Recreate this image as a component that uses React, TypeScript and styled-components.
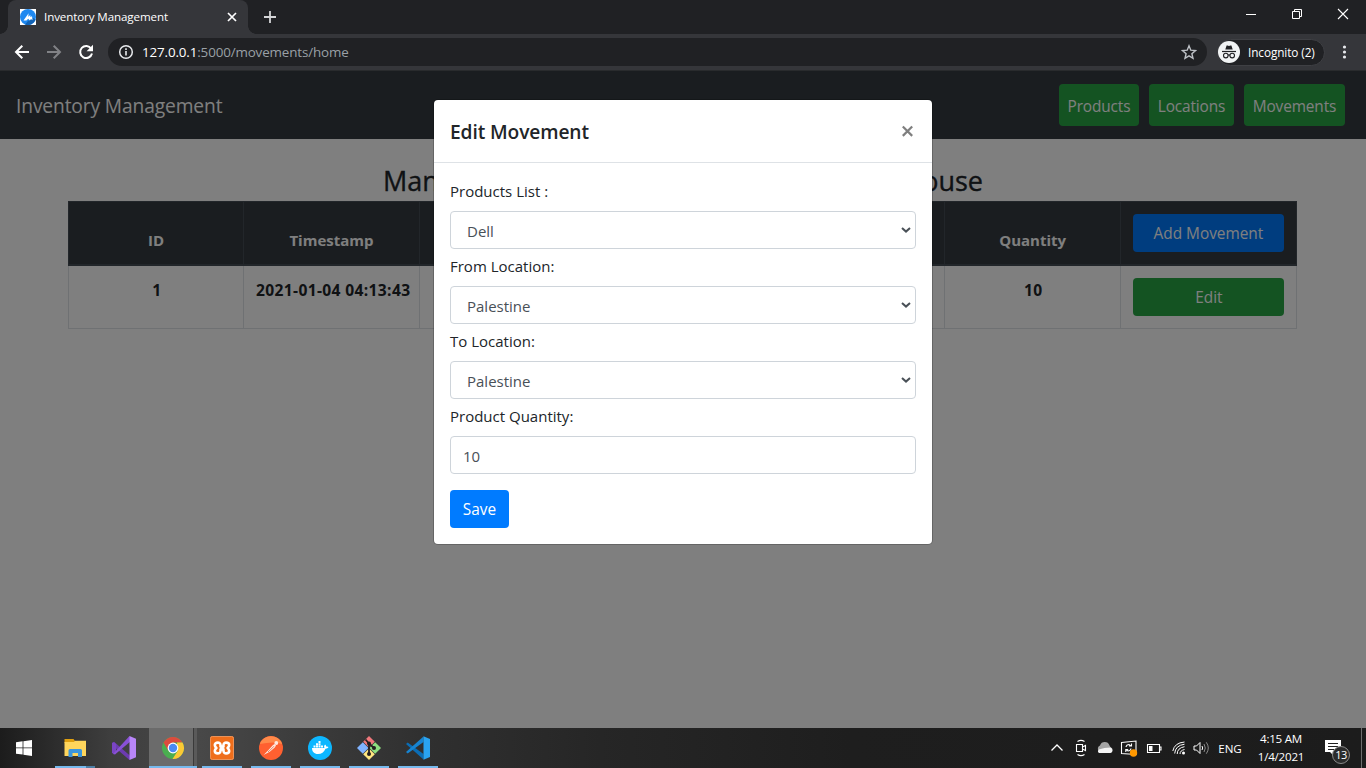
import React from "react";
import styled, { createGlobalStyle } from "styled-components";

const Global = createGlobalStyle`
  * { box-sizing: border-box; }
  html, body { margin: 0; padding: 0; overflow: hidden; }
  body { font-family: "Open Sans", "Noto Sans", sans-serif; font-size: 15.4px; color: #212529; }
  h2, h5 { margin: 0; font-weight: 500; }
`;

const Screen = styled.div`
  width: 1366px;
  height: 768px;
  display: flex;
  flex-direction: column;
  overflow: hidden;
`;

const Text = styled.span<{ $ls?: number }>`
  letter-spacing: ${(p) => p.$ls ?? 0}px;
  white-space: nowrap;
`;

/* ---------- browser chrome ---------- */
const TabStrip = styled.div`
  height: 34px;
  flex: none;
  background: #202124;
  display: flex;
  align-items: flex-end;
`;

const TabFlare = styled.div<{ $side: "left" | "right" }>`
  width: 8px;
  height: 8px;
  background: radial-gradient(
    circle at ${(p) => (p.$side === "left" ? "0 0" : "100% 0")},
    transparent 7.5px,
    #35363a 8px
  );
`;

const Tab = styled.div`
  width: 240px;
  height: 34px;
  background: #35363a;
  border-radius: 8px 8px 0 0;
  display: flex;
  align-items: center;
  padding: 0 10px 0 12px;
  color: #fff;
  font-size: 11.6px;
`;

const TabTitle = styled.span`
  flex: 1;
  margin: -2px 0 0 8px;
  letter-spacing: -0.11px;
  white-space: nowrap;
`;

const NewTab = styled.div`
  width: 28px;
  height: 34px;
  display: flex;
  align-items: center;
  justify-content: center;
`;

const WindowControls = styled.div`
  margin-left: auto;
  height: 34px;
  display: flex;
  svg { width: 46px; height: 34px; }
`;

const Toolbar = styled.div`
  height: 37px;
  flex: none;
  background: #35363a;
  border-bottom: 1px solid #292b2d;
  display: flex;
  align-items: center;
  padding: 0 9px 0 6px;
`;

const ToolButton = styled.div`
  width: 32px;
  height: 32px;
  display: flex;
  align-items: center;
  justify-content: center;
`;

const AddressBar = styled.div`
  flex: 1;
  height: 28px;
  margin: 0 10px 0 6px;
  padding: 0 10px;
  border-radius: 14px;
  background: #202124;
  display: flex;
  align-items: center;
  color: #9aa0a6;
  font-size: 13.4px;
`;

const Url = styled.span`
  flex: 1;
  margin-left: 8px;
  letter-spacing: -0.14px;
  b { color: #fff; font-weight: 400; }
`;

const Profile = styled.div`
  width: 108px;
  height: 27px;
  border-radius: 14px;
  border: 1px solid #3f4044;
  background: #202124;
  display: flex;
  align-items: center;
  gap: 8px;
  color: #fff;
  font-size: 11.8px;
  white-space: nowrap;
`;

/* ---------- page ---------- */
const Page = styled.main`
  position: relative;
  height: 657px;
  flex: none;
  background: #fff;
`;

const Navbar = styled.nav`
  height: 68px;
  background: #343a40;
  display: flex;
  align-items: center;
  justify-content: space-between;
  padding: 0 21px 0 16px;
`;

const Brand = styled.div`
  color: #fff;
  font-size: 19.2px;
  letter-spacing: -0.12px;
`;

const NavLinks = styled.div`
  display: flex;
  gap: 10px;
`;

const NavButton = styled.button<{ $w: number }>`
  width: ${(p) => p.$w}px;
  height: 42px;
  padding: 2px 0 0;
  border: 0;
  border-radius: 4px;
  background: #28a745;
  color: #fff;
  font: inherit;
  letter-spacing: -0.12px;
`;

const Heading = styled.h2`
  width: 600px;
  height: 62px;
  margin: 0 auto;
  padding-top: 23px;
  display: flex;
  justify-content: space-between;
  font-size: 27px;
  line-height: 38px;
  white-space: nowrap;
  -webkit-text-stroke: 0.35px currentColor;
`;

const Table = styled.table`
  width: 1229px;
  margin-left: 68px;
  table-layout: fixed;
  border-collapse: collapse;
  text-align: center;
`;

const DataColumn = styled.col`
  width: 175.3px;
`;

const HeadCell = styled.th`
  height: 63px;
  padding: 11px 12px 12px;
  background: #343a40;
  color: #fff;
  border: 1px solid #454d55;
  border-bottom-width: 2px;
  vertical-align: bottom;
  font-weight: 700;
  font-size: 15px;
  line-height: 24px;
`;

const BodyCell = styled.td<{ $ls?: number }>`
  height: 63px;
  padding: 12px 0 12px ${(p) => (p.$ls ? p.$ls * 10 : 1)}px;
  border: 1px solid #dee2e6;
  vertical-align: top;
  font-weight: 700;
  font-size: 15.6px;
  line-height: 24px;
  letter-spacing: ${(p) => p.$ls ?? 0}px;
  white-space: nowrap;
`;

const Button = styled.button<{ $tone: "blue" | "green"; $w: number }>`
  display: block;
  width: ${(p) => p.$w}px;
  height: 38px;
  padding: 1px 0 0;
  margin: 0 auto;
  border: 0;
  border-radius: 4px;
  background: ${(p) => (p.$tone === "blue" ? "#007bff" : "#28a745")};
  color: #fff;
  font: 400 15.4px "Open Sans", sans-serif;
`;

/* ---------- modal ---------- */
const Backdrop = styled.div`
  position: absolute;
  inset: 0;
  background: rgba(0, 0, 0, 0.5);
`;

const Modal = styled.section`
  width: 498px;
  height: 444px;
  margin: 29px 0 0 434px;
  background: #fff;
  border-radius: 4px;
  box-shadow: 0 0 0 1px rgba(0, 0, 0, 0.2);
`;

const ModalHeader = styled.header`
  height: 63px;
  border-bottom: 1px solid #dee2e6;
  padding: 0 18px 0 16px;
  display: flex;
  align-items: center;
  justify-content: space-between;
`;

const ModalTitle = styled.h5`
  font-size: 19.2px;
  font-weight: 600;
  letter-spacing: -0.12px;
`;

const Form = styled.form`
  padding: 16px;
`;

const Label = styled.label`
  display: block;
  height: 24px;
  margin-bottom: 8px;
  font-size: 15px;
  line-height: 24px;
`;

const Field = styled.div<{ $indent: number }>`
  height: 38px;
  margin-bottom: 5px;
  padding: 2px 4px 0 ${(p) => p.$indent}px;
  border: 1px solid #ced4da;
  border-radius: 4px;
  display: flex;
  align-items: center;
  justify-content: space-between;
  color: #495057;
  font-size: 15px;
  svg { margin-top: -2px; }
`;

const SaveRow = styled.div`
  padding-top: 11px;
  display: flex;
  button { margin: 0; }
`;

/* ---------- taskbar ---------- */
const Taskbar = styled.footer`
  height: 40px;
  flex: none;
  display: flex;
  background: linear-gradient(90deg, #1c1c1c 0, #2b2b2b 50px, #3e3e3e 110px, #484848 200px, #3c3c3c 300px, #303030 420px, #262626 600px, #1e1e1e 850px, #1c1c1c 1366px);
  color: #fff;
`;

const Start = styled.div`
  width: 50px;
  height: 40px;
  padding: 12px 0 0 16px;
`;

const TaskButton = styled.div<{ $state?: "closed" | "active" | "multi" }>`
  width: 49px;
  height: 40px;
  padding: 8px 0 0 12.5px;
  background:
    ${(p) =>
      p.$state === "closed"
        ? "none"
        : p.$state === "active"
        ? "linear-gradient(#76b9ed, #76b9ed) 1px 38px / 48px 2px no-repeat, linear-gradient(90deg, transparent 1px, #6b6b6b 1px, #6b6b6b 45px, #3a3a3a 45px, #3a3a3a 46px, #5a5a5a 46px)"
        : p.$state === "multi"
        ? "linear-gradient(90deg, #76b9ed 31px, #4d7fa5 31px) 5px 38px / 40px 2px no-repeat"
        : "linear-gradient(#76b9ed, #76b9ed) 5px 38px / 40px 2px no-repeat"};
`;

const Tray = styled.div`
  margin-left: auto;
  display: flex;
  align-items: center;
  font-size: 11.6px;
`;

const TrayIcon = styled.div<{ $w: number }>`
  width: ${(p) => p.$w}px;
  display: flex;
  justify-content: center;
`;

const Clock = styled.div`
  width: 67px;
  height: 40px;
  padding: 2px 1px 0 0;
  text-align: center;
  line-height: 18px;
  letter-spacing: -0.25px;
`;

const Notice = styled.div`
  width: 46px;
  height: 40px;
  position: relative;
  padding: 11px 0 0 10px;
`;

const Count = styled.span`
  position: absolute;
  left: 17px;
  top: 18px;
  width: 18px;
  height: 18px;
  border-radius: 50%;
  border: 1px solid #8a8a8a;
  background: #2b2b2b;
  text-align: center;
  font-size: 11px;
  line-height: 16px;
  letter-spacing: -0.6px;
`;

const DesktopEdge = styled.div`
  width: 5px;
  height: 40px;
  border-left: 1px solid #6e6e6e;
`;

const stroke = { fill: "none", stroke: "#fff" } as const;

const Chevron = () => (
  <svg width="10" height="6" viewBox="0 0 10 6">
    <path d="M1 1l4 3.600L9 1" fill="none" stroke="#495057" strokeWidth="2" />
  </svg>
);

function Favicon() {
  return (
    <svg width="16" height="16" viewBox="0 0 16 16">
      <path d="M0 0h16v16H0z" fill="#fff" />
      <circle cx="8" cy="8" r="8" fill="#1e88f0" />
      <path d="M8 12l5.500-3 2.200 1.500A8 8 0 0 1 5 15.400z" fill="#1263b5" />
      <path d="M3.500 11.600L8.600 4.200l-.3 3.600 2-1.800v2l1.700-.8.5 4.100-1.500-1.200-1.200 1.300-1.600-1.600-1.800 1.800z" fill="#fff" />
    </svg>
  );
}

function BrowserChrome() {
  return (
    <>
      <TabStrip>
        <TabFlare $side="left" />
        <Tab>
          <Favicon />
          <TabTitle>Inventory Management</TabTitle>
          <svg width="12" height="12" viewBox="0 0 12 12">
            <path d="M2 2l8 8M10 2l-8 8" {...stroke} strokeWidth="1.7" />
          </svg>
        </Tab>
        <TabFlare $side="right" />
        <NewTab>
          <svg width="12" height="12" viewBox="0 0 12 12">
            <path d="M6 0v12M0 6h12" fill="none" stroke="#d4d5d7" strokeWidth="1.8" />
          </svg>
        </NewTab>
        <WindowControls>
          <svg viewBox="0 0 46 34"><path d="M18 14.500h10" {...stroke} /></svg>
          <svg viewBox="0 0 46 34"><path d="M18.500 11.500h7v7h-7zM20.500 11.500v-2h7v7h-2" {...stroke} /></svg>
          <svg viewBox="0 0 46 34"><path d="M18 9l10 10M28 9L18 19" {...stroke} strokeWidth="1.1" /></svg>
        </WindowControls>
      </TabStrip>
      <Toolbar>
        <ToolButton>
          <svg width="16" height="16" viewBox="0 0 16 16"><path d="M15 8H2.500M8.300 1.700L2 8l6.300 6.300" {...stroke} strokeWidth="2" /></svg>
        </ToolButton>
        <ToolButton>
          <svg width="16" height="16" viewBox="0 0 16 16"><path d="M1 8h12.500M7.700 1.700L14 8l-6.300 6.300" fill="none" stroke="#818286" strokeWidth="2" /></svg>
        </ToolButton>
        <ToolButton>
          <svg width="16" height="16" viewBox="0 0 16 16">
            <path d="M13.200 4.700A6 6 0 1 0 14 9.500" {...stroke} strokeWidth="2" />
            <path d="M15 .8v6.400H8.600z" fill="#fff" />
          </svg>
        </ToolButton>
        <AddressBar>
          <svg width="16" height="16" viewBox="0 0 16 16">
            <circle cx="8" cy="8" r="6.300" fill="none" stroke="#e8eaed" strokeWidth="1.500" />
            <path d="M8 7v4.600M8 4.200v1.700" fill="none" stroke="#e8eaed" strokeWidth="1.600" />
          </svg>
          <Url><b>127.0.0.1</b>:5000/movements/home</Url>
          <svg width="16" height="16" viewBox="0 0 16 16">
            <path d="M8 1.800l1.800 4.400 4.700.4-3.600 3.100 1.100 4.600L8 11.900l-4 2.400 1.100-4.600-3.600-3.100 4.700-.4z" fill="none" stroke="#bdc1c6" strokeWidth="1.400" />
          </svg>
        </AddressBar>
        <Profile>
          <svg width="22" height="22" viewBox="0 0 22 22">
            <circle cx="11" cy="11" r="11" fill="#f1f3f4" />
            <path d="M7.300 8.600l1.300-4.200 1 .1L11 5l1.400-.5 1-.1 1.300 4.200z" fill="#202124" />
            <path d="M4 10.500h14" stroke="#202124" strokeWidth="1.200" />
            <g fill="none" stroke="#202124" strokeWidth="1.100">
              <circle cx="7.800" cy="14.600" r="2.300" /><circle cx="14.200" cy="14.600" r="2.300" /><path d="M10 14.200q1-.7 2 0" />
            </g>
          </svg>
          <Text $ls={-0.1}>Incognito (2)</Text>
        </Profile>
        <ToolButton>
          <svg width="16" height="16" viewBox="0 0 16 16" fill="#e8eaed">
            <circle cx="11.500" cy="3" r="1.600" /><circle cx="11.500" cy="8" r="1.600" /><circle cx="11.500" cy="13" r="1.600" />
          </svg>
        </ToolButton>
      </Toolbar>
    </>
  );
}

function EditMovement() {
  const selects = [
    ["Products List :", "Dell"],
    ["From Location:", "Palestine"],
    ["To Location:", "Palestine"],
  ];
  return (
    <Backdrop>
      <Modal>
        <ModalHeader>
          <ModalTitle>Edit Movement</ModalTitle>
          <svg width="13" height="13" viewBox="0 0 13 13">
            <path d="M1.800 1.500l9.400 9.400M11.200 1.500l-9.400 9.400" fill="none" stroke="#7f7f7f" strokeWidth="2.200" />
          </svg>
        </ModalHeader>
        <Form>
          {selects.map(([name, value]) => (
            <React.Fragment key={name}>
              <Label>{name}</Label>
              <Field $indent={16}>{value}<Chevron /></Field>
            </React.Fragment>
          ))}
          <Label>Product Quantity:</Label>
          <Field $indent={12}>10</Field>
          <SaveRow><Button type="button" $tone="blue" $w={59}>Save</Button></SaveRow>
        </Form>
      </Modal>
    </Backdrop>
  );
}

function TaskbarApps() {
  return (
    <>
      <Start>
        <svg width="16" height="16" viewBox="0 0 16 16" fill="#fff">
          <path d="M0 2.300L6.600 1.300v6.200H0zM7.400 1.200L16 0v7.500H7.400zM0 8.300h6.600v6.300L0 13.700zM7.400 8.300H16V16l-8.600-1.200z" />
        </svg>
      </Start>
      <TaskButton $state="multi">
        <svg width="24" height="24" viewBox="0 0 24 24">
          <path d="M1.500 3h9l1.500 2v2H1.500z" fill="#e0a010" />
          <path d="M1.500 6H11l1-1.200h11V20H1.500z" fill="#ffd65c" />
          <path d="M5.500 21v-6.500q0-1.500 1.500-1.500h10.500q1.500 0 1.500 1.500V21h-4v-4H9.500v4z" fill="#3c96dc" />
        </svg>
      </TaskButton>
      <TaskButton $state="closed">
        <svg width="24" height="24" viewBox="0 0 24 24">
          <path d="M0 7l2-1.200L19 20.500 17.500 24 0 9z" fill="#6c3bb0" />
          <path d="M0 17V7l2-.8 2.200 2v7.600L2 18z" fill="#7a45c4" />
          <path d="M1 18L17.500 0 19 5 3 18.500z" fill="#8951d6" />
          <path d="M17.500 0L24 2.800v18.400L17.500 24z" fill="#b886f8" />
        </svg>
      </TaskButton>
      <TaskButton $state="active">
        <svg width="24" height="24" viewBox="0 0 24 24">
          <circle cx="12" cy="12" r="11" fill="#4aae50" />
          <path d="M2.500 6.500A11 11 0 0 1 21.500 6.500H12L7.300 14.800z" fill="#dc4b3e" />
          <path d="M21.500 6.500A11 11 0 0 1 11.500 23L16.800 14.700 16 6.500z" fill="#fcc934" />
          <circle cx="12" cy="12" r="5.400" fill="#fff" />
          <circle cx="12" cy="12" r="4.200" fill="#4a8af4" />
        </svg>
      </TaskButton>
      <TaskButton>
        <svg width="24" height="24" viewBox="0 0 24 24">
          <rect width="24" height="24" rx="2.500" fill="#ef6e1b" />
          <rect x=".5" y=".5" width="23" height="23" rx="2" fill="none" stroke="#e9935a" />
          <path d="M10.500 10.600Q11 6.600 8 6.600 4.800 6.600 4.800 9q0 1.500 1.600 3-1.600 1.500-1.600 3 0 2.400 3.200 2.400 3 0 2.500-4h3q-.5 4 2.500 4 3.200 0 3.200-2.400 0-1.500-1.600-3 1.600-1.500 1.600-3 0-2.400-3.200-2.400-3 0-2.500 4z" fill="none" stroke="#fff" strokeWidth="2.600" strokeLinejoin="round" />
        </svg>
      </TaskButton>
      <TaskButton>
        <svg width="24" height="24" viewBox="0 0 24 24">
          <circle cx="12" cy="12" r="12" fill="#ff6030" />
          <path d="M.8 8A12 12 0 0 1 23.200 8q-8-3-22.400 0z" fill="#ff8a4a" />
          <path d="M4.500 19l4.500-4.500 5-5.500 1.800-1 1.200 1.500-1.200 2-5 4.200z" fill="#ffe9e0" />
          <path d="M10 15.200l5-5M8.500 14.500l1.500 1.500" stroke="#e06a42" strokeWidth=".8" />
          <circle cx="17.300" cy="7" r="1.900" fill="#ffe9e0" />
        </svg>
      </TaskButton>
      <TaskButton>
        <svg width="24" height="24" viewBox="0 0 24 24">
          <circle cx="12" cy="12" r="12" fill="#0db7ff" />
          <path d="M4 12h12.500c-.8-1.500-.3-2.700.6-3.500.8.6 1.200 1.300 1.200 2.200.9-.2 1.700 0 2.200.4-.6 1.200-1.600 1.600-3 1.600C16 16 13.500 18 10 18c-4 0-6-2.400-6-6z" fill="#fff" />
          <path d="M5.500 9.500h2v2h-2zM8 9.500h2v2H8zM10.500 9.500h2v2h-2zM13 9.500h2v2h-2zM8 7.200h2v2H8zM10.500 7.200h2v2h-2zM10.500 5h2v1.900h-2z" fill="#fff" />
        </svg>
      </TaskButton>
      <TaskButton>
        <svg width="24" height="24" viewBox="0 0 24 24">
          <path d="M12 0l5.800 5.800L12 11.600 6.200 5.800z" fill="#f0787c" />
          <path d="M5.800 6.200L11.600 12l-5.800 5.800L0 12z" fill="#80b3ff" />
          <path d="M18.200 6.200L24 12l-5.800 5.800-5.800-5.800z" fill="#8de080" />
          <path d="M12 12.400l5.800 5.800L12 24l-5.800-5.800z" fill="#ffe680" />
          <g fill="#231f20">
            <circle cx="12" cy="18" r="2" /><circle cx="17" cy="12" r="2" /><circle cx="12" cy="7.500" r="2" />
          </g>
          <path d="M8.500 3.500l3.500 4V18M12 7.500l5 4.500" fill="none" stroke="#231f20" strokeWidth="1.800" />
        </svg>
      </TaskButton>
      <TaskButton>
        <svg width="24" height="24" viewBox="0 0 24 24">
          <path d="M1.700 6.500L17.500 18v5.500L0 8z" fill="#0b6db5" />
          <path d="M1.700 17.500L17.500 6V.5L0 16z" fill="#1784d1" />
          <path d="M17.500.3L24 3v18l-6.500 2.700z" fill="#2aa3f0" />
        </svg>
      </TaskButton>
    </>
  );
}

function SystemTray() {
  return (
    <Tray>
      <TrayIcon $w={24}>
        <svg width="14" height="14" viewBox="0 0 14 14"><path d="M1.500 9.500L7 4l5.500 5.500" {...stroke} strokeWidth="1.300" /></svg>
      </TrayIcon>
      <TrayIcon $w={24}>
        <svg width="14" height="18" viewBox="0 0 14 18">
          <path d="M3.500 2.500Q7 .3 10.500 2.500M3.500 15.500Q7 17.700 10.500 15.500M2.500 5.500h6v7h-6zM8.500 8l3-1.500v5l-3-1.500" {...stroke} strokeWidth="1.100" />
        </svg>
      </TrayIcon>
      <TrayIcon $w={24}>
        <svg width="16" height="12" viewBox="0 0 16 12">
          <path d="M2 9A3.200 3.200 0 0 1 3 3.500 5 5 0 0 1 12.500 3.500L14 6z" fill="#a5a5a5" />
          <path d="M2 11q-2-1.500-.2-3.500L7.500 6 14 5.500A3 3 0 0 1 13.500 11z" fill="#f5f5f5" />
        </svg>
      </TrayIcon>
      <TrayIcon $w={24}>
        <svg width="18" height="18" viewBox="0 0 18 18">
          <path d="M1.500 3.500L16 2v13.500L1.500 14.500z" {...stroke} strokeWidth="1.100" />
          <path d="M6 8q.5-2.500 3-2.500L11 7M11.500 4.500V7H9M11 9.500q-.5 2.500-3 2.500L6.200 10.800M5.800 13v-2.500h2.400" {...stroke} strokeWidth="1.100" />
          <circle cx="13.500" cy="14" r="3.700" fill="#ff9800" />
        </svg>
      </TrayIcon>
      <TrayIcon $w={25}>
        <svg width="16" height="12" viewBox="0 0 16 12">
          <path d="M1.500 2.500h12v8h-12zM13.500 5h1.500v3h-1.500" {...stroke} strokeWidth="1.100" /><path d="M3 4h3.500v5H3z" fill="#fff" />
        </svg>
      </TrayIcon>
      <TrayIcon $w={25}>
        <svg width="14" height="14" viewBox="0 0 14 14">
          <circle cx="11.500" cy="12" r="1.500" fill="#fff" />
          <path d="M8 13q0-3.500 4.500-4.500M5.200 13q0-6 7.300-7.300M2.700 12.500q.5-8 9.800-9.300M.8 10Q2.500 1.800 12.500 1" {...stroke} strokeWidth="1" />
        </svg>
      </TrayIcon>
      <TrayIcon $w={21}>
        <svg width="17" height="14" viewBox="0 0 17 14">
          <path d="M1 5h2.500L7 1.500v11L3.500 9H1z" {...stroke} />
          <path d="M9 5q1.300 2 0 4" {...stroke} />
          <path d="M11 3q2.600 4 0 8M13.300 1.300q4 5.700 0 11.400" fill="none" stroke="#8a8a8a" />
        </svg>
      </TrayIcon>
      <TrayIcon $w={36}><Text $ls={-0.1}>ENG</Text></TrayIcon>
      <Clock>4:15 AM<br />1/4/2021</Clock>
      <Notice>
        <svg width="16" height="16" viewBox="0 0 16 16">
          <path d="M0 1h16v12H8v3l-3-3H0z" fill="#fff" />
          <path d="M3 4.500h10M3 7.500h10M3 10.500h6" stroke="#222" />
        </svg>
        <Count>13</Count>
      </Notice>
      <DesktopEdge />
    </Tray>
  );
}

export default function App() {
  return (
    <Screen>
      <Global />
      <BrowserChrome />
      <Page>
        <Navbar>
          <Brand>Inventory Management</Brand>
          <NavLinks>
            <NavButton $w={80}>Products</NavButton>
            <NavButton $w={85}>Locations</NavButton>
            <NavButton $w={101}>Movements</NavButton>
          </NavLinks>
        </Navbar>
        <Heading><span>Man</span><span>house</span></Heading>
        <Table>
          <colgroup>
            {[0, 1, 2, 3, 4, 5].map((i) => <DataColumn key={i} />)}
            <col />
          </colgroup>
          <thead>
            <tr>
              <HeadCell>ID</HeadCell>
              <HeadCell>Timestamp</HeadCell>
              <HeadCell />
              <HeadCell />
              <HeadCell />
              <HeadCell>Quantity</HeadCell>
              <HeadCell><Button $tone="blue" $w={151}>Add Movement</Button></HeadCell>
            </tr>
          </thead>
          <tbody>
            <tr>
              <BodyCell>1</BodyCell>
              <BodyCell $ls={0.35}>2021-01-04 04:13:43</BodyCell>
              <BodyCell />
              <BodyCell />
              <BodyCell />
              <BodyCell $ls={0.1}>10</BodyCell>
              <BodyCell><Button $tone="green" $w={151}>Edit</Button></BodyCell>
            </tr>
          </tbody>
        </Table>
        <EditMovement />
      </Page>
      <Taskbar>
        <TaskbarApps />
        <SystemTray />
      </Taskbar>
    </Screen>
  );
}
